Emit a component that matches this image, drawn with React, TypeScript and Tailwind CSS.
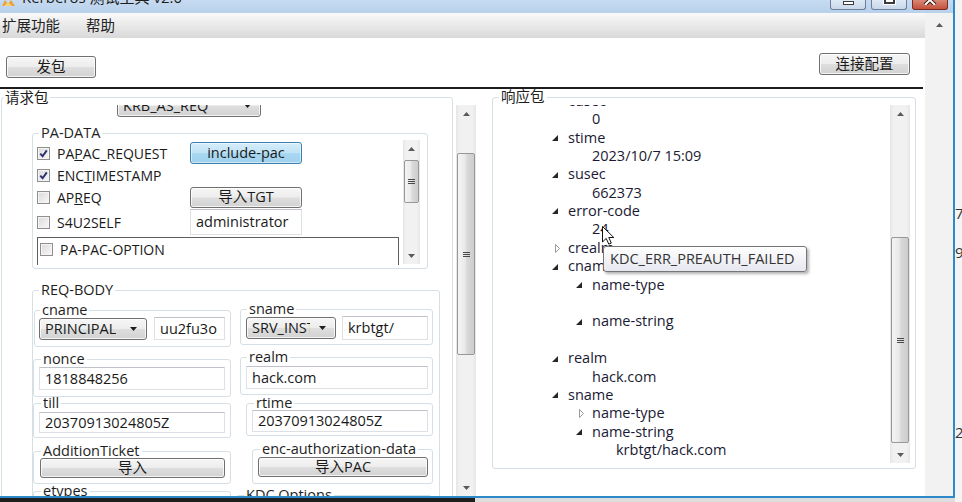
import clsx, { type ClassValue } from "clsx";
import { twMerge } from "tailwind-merge";
import type { ReactNode } from "react";

const cn = (...v: ClassValue[]) => twMerge(clsx(v));

const font = "font-['Open_Sans','Noto_Sans_CJK_SC',sans-serif]";
const btn =
  "rounded-[3px] border border-[#707070] bg-[linear-gradient(#f6f6f6_0%,#ededed_48%,#dedede_52%,#d2d2d2_100%)] shadow-[inset_0_0_0_1px_rgba(255,255,255,0.75)]";

function Group({
  label,
  className,
  legendClass,
  children,
}: {
  label: string;
  className?: string;
  legendClass?: string;
  children?: ReactNode;
}) {
  return (
    <fieldset className={cn("min-w-0 shrink-0 rounded-[3px] border border-[#d5dfe5]", className)}>
      <legend className={cn("ml-[6px] px-[2px] text-[14.5px] leading-[16px] text-[#1e1e1e]", legendClass)}>
        {label}
      </legend>
      {children}
    </fieldset>
  );
}

function TextBox({ value, className }: { value: string; className?: string }) {
  return (
    <div
      className={cn(
        "flex shrink-0 items-center overflow-hidden border border-[#dde1e6] border-t-[#bfc3c9] bg-white px-[5px] text-[14.5px] whitespace-nowrap",
        className
      )}
    >
      {value}
    </div>
  );
}

function Button({ children, className }: { children: ReactNode; className?: string }) {
  return <div className={cn(btn, "flex shrink-0 items-center justify-center text-[14.5px]", className)}>{children}</div>;
}

function Combo({ value, className, textClass }: { value: string; className?: string; textClass?: string }) {
  return (
    <div className={cn(btn, "flex shrink-0 items-center justify-between overflow-hidden pl-[5px] pr-[9px] text-[14.5px]", className)}>
      <span className={cn("overflow-hidden whitespace-nowrap", textClass)}>{value}</span>
      <svg width="7" height="4" className="shrink-0">
        <path d="M0 0h7L3.5 4z" fill="#1e1e1e" />
      </svg>
    </div>
  );
}

function CheckBox({ checked, children, className }: { checked?: boolean; children: ReactNode; className?: string }) {
  return (
    <div className={cn("flex items-center gap-[7px] text-[14px]", className)}>
      <div className="flex h-[13px] w-[13px] shrink-0 items-center justify-center border border-[#8f8f8f] bg-[linear-gradient(135deg,#dadada,#f8f8f8)] shadow-[inset_0_0_0_1px_#f4f4f4]">
        {checked && (
          <svg width="9" height="9" viewBox="0 0 9 9">
            <path d="M1.3 4.6L3.6 7.2L7.8 1.4" fill="none" stroke="#2b2d70" strokeWidth="1.9" />
          </svg>
        )}
      </div>
      <span className="whitespace-nowrap">{children}</span>
    </div>
  );
}

function Arrow({ up }: { up?: boolean }) {
  return (
    <svg width="7" height="4">
      <path d={up ? "M0 4L3.5 0L7 4z" : "M0 0h7L3.5 4z"} fill="#5a5a5a" />
    </svg>
  );
}

function VScroll({ className, thumb }: { className?: string; thumb?: string }) {
  return (
    <div
      className={cn(
        "flex shrink-0 flex-col items-stretch bg-[linear-gradient(to_right,#e6e6e6,#f1f1f1_18%,#f1f1f1_82%,#e6e6e6)]",
        className
      )}
    >
      <div className="flex h-[17px] shrink-0 items-center justify-center">
        <Arrow up />
      </div>
      {thumb && (
        <div
          className={cn(
            "mx-[1px] flex shrink-0 items-center justify-center rounded-[2px] border border-[#979797] bg-[linear-gradient(to_right,#f4f4f4,#e9e9e9_45%,#d9d9d9_55%,#cdcdcd)]",
            thumb
          )}
        >
          <div className="flex w-[7px] flex-col gap-[1px]">
            <div className="h-[1px] bg-[#4a4a4a]" />
            <div className="h-[1px] bg-[#4a4a4a]" />
            <div className="h-[1px] bg-[#4a4a4a]" />
          </div>
        </div>
      )}
      <div className="flex-1" />
      <div className="flex h-[17px] shrink-0 items-center justify-center">
        <Arrow />
      </div>
    </div>
  );
}

function TitleBar() {
  return (
    <div className="flex h-[13px] shrink-0 overflow-hidden bg-[linear-gradient(#c6dbf1,#b8d0ea)]">
      <svg width="16" height="8" className="ml-[1px] shrink-0">
        <path d="M1 6L4 0L7 4L10 0L14 6z" fill="#e7a33a" />
        <path d="M3 6L7 2L11 6z" fill="#f5d27a" />
      </svg>
      <div className="-mt-[13px] ml-[5px] text-[15px] leading-[21px] whitespace-nowrap text-[#1e1e1e]">Kerberos 测试工具 v2.0</div>
      <div className="ml-auto mr-[5px] flex gap-[5px]">
        <div className="flex h-[10px] w-[36px] items-start justify-center rounded-b-[3px] border border-t-0 border-[#6d7f9a] bg-[linear-gradient(#dfe9f5,#c8d7ea)]">
          <div className="mt-[1px] h-[4px] w-[11px] border border-[#3b3b3b] bg-white" />
        </div>
        <div className="flex h-[10px] w-[36px] items-start justify-center rounded-b-[3px] border border-t-0 border-[#6d7f9a] bg-[linear-gradient(#dfe9f5,#c8d7ea)]">
          <div className="-mt-[5px] h-[9px] w-[11px] border-2 border-[#3b3b3b] bg-white shadow-[0_0_0_1px_#fff]" />
        </div>
        <div className="flex h-[10px] w-[36px] items-start justify-center rounded-b-[3px] border border-t-0 border-[#7a2c20] bg-[linear-gradient(#d98877,#c4513c)]">
          <svg width="14" height="5">
            <path d="M2 -5L12 5M12 -5L2 5" stroke="#3a1a14" strokeWidth="4" />
            <path d="M2 -5L12 5M12 -5L2 5" stroke="#fff" strokeWidth="2" />
          </svg>
        </div>
      </div>
    </div>
  );
}

function RequestPanel() {
  return (
    <div className="flex w-[477px] shrink-0">
      <Group label="请求包" className="ml-[1px] mt-[1px] h-[440px] w-[452px]" legendClass="ml-[2px] px-[1px] leading-[15px]">
        <div className="h-[392px] overflow-hidden">
          <Combo value="KRB_AS_REQ" className="-mt-[10px] ml-[115px] h-[22px] w-[144px]" />

          <Group label="PA-DATA" className="ml-[30px] mt-[8px] h-[144px] w-[396px]">
            <div className="flex">
              <div className="h-[124px] w-[368px] overflow-hidden pl-[4px]">
                <div className="mt-[1px] flex h-[22px] items-center">
                  <CheckBox checked className="w-[153px]">
                    PA<span className="underline">P</span>AC_REQUEST
                  </CheckBox>
                  <Button className="h-[22px] w-[112px] border-[#3c7fb1] bg-[linear-gradient(#d6edfa_0%,#c0e3f6_48%,#a9d7f1_52%,#9fd1ee_100%)] shadow-[inset_0_0_0_1px_rgba(255,255,255,0.5)]">
                    include-pac
                  </Button>
                </div>
                <div className="flex h-[22px] items-center">
                  <CheckBox checked className="w-[153px]">
                    ENC<span className="underline">T</span>IMESTAMP
                  </CheckBox>
                </div>
                <div className="flex h-[22px] items-center">
                  <CheckBox className="w-[153px]">
                    AP<span className="underline">R</span>EQ
                  </CheckBox>
                  <Button className="h-[21px] w-[112px]">导入TGT</Button>
                </div>
                <div className="mt-[1px] flex h-[26px] items-center">
                  <CheckBox className="w-[153px]">S4U2SELF</CheckBox>
                  <TextBox value="administrator" className="h-[26px] w-[112px]" />
                </div>
                <div className="mt-[2px] h-[60px] w-[362px] border border-b-0 border-[#5e5e5e] pl-[2px]">
                  <div className="flex h-[23px] items-center">
                    <CheckBox>PA-PAC-OPTION</CheckBox>
                  </div>
                  <div className="flex h-[20px] items-start pl-[48px]">
                    <CheckBox>Claims</CheckBox>
                  </div>
                </div>
              </div>
              <VScroll className="-mt-[1px] ml-[2px] h-[124px] w-[17px]" thumb="mt-[3px] h-[43px]" />
            </div>
          </Group>

          <Group label="REQ-BODY" className="ml-[30px] mt-[13px] h-[300px] w-[408px]">
            <div className="mt-[4px] flex items-start">
              <Group label="cname" className="ml-[1px] h-[45px] w-[197px]" legendClass="ml-[5px]">
                <div className="flex items-start">
                  <Combo value="PRINCIPAL" className="ml-[4px] h-[22px] w-[108px]" />
                  <TextBox value="uu2fu3o" className="-mt-[1px] ml-[7px] h-[23px] w-[71px]" />
                </div>
              </Group>
              <Group label="sname" className="-mt-[1px] ml-[9px] h-[44px] w-[193px]">
                <div className="flex items-start">
                  <Combo value="SRV_INST" className="ml-[5px] h-[22px] w-[90px]" textClass="w-[58px]" />
                  <TextBox value="krbtgt/" className="-mt-[1px] ml-[6px] h-[24px] w-[86px]" />
                </div>
              </Group>
            </div>

            <div className="mt-[4px] flex items-start">
              <Group label="nonce" className="h-[46px] w-[198px]" legendClass="ml-[7px]">
                <TextBox value="1818848256" className="ml-[5px] h-[23px] w-[186px]" />
              </Group>
              <Group label="realm" className="-mt-[2px] ml-[9px] h-[46px] w-[193px]">
                <TextBox value="hack.com" className="ml-[5px] mt-[1px] h-[23px] w-[182px]" />
              </Group>
            </div>

            <div className="-mt-[2px] flex items-start">
              <Group label="till" className="h-[43px] w-[198px]" legendClass="ml-[7px]">
                <TextBox value="20370913024805Z" className="ml-[5px] mt-[1px] h-[21px] w-[186px]" />
              </Group>
              <Group label="rtime" className="ml-[15px] h-[41px] w-[187px]" legendClass="ml-[7px]">
                <TextBox value="20370913024805Z" className="-mt-[1px] ml-[5px] h-[22px] w-[176px]" />
              </Group>
            </div>

            <div className="mt-[5px] flex items-start">
              <Group label="AdditionTicket" className="h-[41px] w-[198px]" legendClass="ml-[7px]">
                <Button className="-mt-[1px] ml-[6px] h-[20px] w-[185px]">导入</Button>
              </Group>
              <Group label="enc-authorization-data" className="-mt-[2px] ml-[21px] h-[43px] w-[181px]" legendClass="ml-[7px]">
                <Button className="ml-[5px] h-[20px] w-[170px]">导入PAC</Button>
              </Group>
            </div>

            <div className="-mt-[1px] flex items-start">
              <Group label="etypes" className="h-[40px] w-[198px]" legendClass="ml-[7px]" />
              <Group label="KDC Options" className="ml-[5px] mt-[4px] h-[40px] w-[196px]" legendClass="ml-[7px]" />
            </div>
          </Group>
        </div>
      </Group>
      <VScroll className="ml-[3px] mt-[16px] h-[391px] w-[20px]" thumb="mt-[31px] h-[202px]" />
    </div>
  );
}

type Row = { lvl: 1 | 2 | 3; text?: string; arrow?: "open" | "closed" };

const rows: Row[] = [
  { lvl: 1, text: "cusec", arrow: "open" },
  { lvl: 2, text: "0" },
  { lvl: 1, text: "stime", arrow: "open" },
  { lvl: 2, text: "2023/10/7 15:09" },
  { lvl: 1, text: "susec", arrow: "open" },
  { lvl: 2, text: "662373" },
  { lvl: 1, text: "error-code", arrow: "open" },
  { lvl: 2, text: "24" },
  { lvl: 1, text: "crealm", arrow: "closed" },
  { lvl: 1, text: "cname", arrow: "open" },
  { lvl: 2, text: "name-type", arrow: "open" },
  { lvl: 3 },
  { lvl: 2, text: "name-string", arrow: "open" },
  { lvl: 3 },
  { lvl: 1, text: "realm", arrow: "open" },
  { lvl: 2, text: "hack.com" },
  { lvl: 1, text: "sname", arrow: "open" },
  { lvl: 2, text: "name-type", arrow: "closed" },
  { lvl: 2, text: "name-string", arrow: "open" },
  { lvl: 3, text: "krbtgt/hack.com" },
];

const indent = { 1: "pl-[57px]", 2: "pl-[81px]", 3: "pl-[105px]" };

function TreeRow({ row, first }: { row: Row; first?: boolean }) {
  return (
    <div className={cn("flex h-[18.4px] items-center text-[14.5px] text-[#1a1a34]", indent[row.lvl], first && "-mt-[13.6px]")}>
      <div className="flex w-[18px] shrink-0 items-center">
        {row.arrow === "open" && (
          <svg width="6" height="6" className="ml-[2px] mt-[1px]">
            <path d="M6 0V6H0z" fill="#262626" />
          </svg>
        )}
        {row.arrow === "closed" && (
          <svg width="6" height="9" className="ml-[5px] mt-[1px]">
            <path d="M0.5 0.5L4.5 4.5L0.5 8.5z" fill="#fff" stroke="#9a9a9a" />
          </svg>
        )}
      </div>
      <span className="whitespace-nowrap">{row.text}</span>
    </div>
  );
}

function ResponsePanel() {
  return (
    <Group label="响应包" className="ml-[15px] h-[380px] w-[424px]">
      <div className="flex">
        <div className="h-[357px] w-[396px] overflow-hidden">
          {rows.map((r, i) => (
            <TreeRow key={i} row={r} first={i === 0} />
          ))}
        </div>
        <VScroll className="ml-[1px] h-[358px] w-[20px]" thumb="mt-[115px] h-[206px]" />
      </div>
    </Group>
  );
}

export default function App() {
  return (
    <div className={cn("relative flex h-[502px] w-[962px] overflow-hidden bg-[#f4f4f4] text-[#1a1a1a]", font)}>
      <div className="flex w-[955px] shrink-0 flex-col">
        <div className="flex h-[498px] flex-col border-r-2 border-b-2 border-[#2d89c8] bg-white">
          <TitleBar />
          <div className="flex min-h-0 flex-1">
            <main className="flex w-[925px] shrink-0 flex-col">
              <div className="flex h-[25px] shrink-0 items-center gap-[26px] bg-[linear-gradient(#f9f9f9,#d9d9d9)] pl-[2px] text-[14.5px] text-[#222]">
                <span>扩展功能</span>
                <span>帮助</span>
              </div>
              <div className="flex h-[49px] shrink-0 items-start justify-between">
                <Button className="ml-[6px] mt-[18px] h-[22px] w-[90px]">发包</Button>
                <Button className="mr-[15px] mt-[15px] h-[22px] w-[91px]">连接配置</Button>
              </div>
              <div className="h-[2px] w-[923px] shrink-0 bg-[#1c1c1c]" />
              <div className="flex min-h-0 flex-1 overflow-hidden">
                <RequestPanel />
                <ResponsePanel />
              </div>
            </main>
            <div className="flex flex-1 flex-col items-center bg-[#f2f2f2] pt-[10px]">
              <Arrow up />
            </div>
          </div>
        </div>
        <div className="flex h-[4px]">
          <div className="w-[475px] bg-[#1e1e1e]" />
          <div className="flex-1 bg-[#dedede]" />
        </div>
      </div>
      <div className="flex w-[7px] flex-col overflow-hidden text-[15px] leading-[20px] text-[#333]">
        <span className="mt-[203px]">7,</span>
        <span className="mt-[19px]">9,</span>
        <span className="mt-[160px]">2,</span>
      </div>

      {/* mouse pointer + tooltip over the tree */}
      <svg width="13" height="20" className="absolute left-[602px] top-[226px]">
        <path d="M0.5 0.5V16L4.2 12.4L6.8 18.2L9.3 17.1L6.8 11.5H11.8Z" fill="#fff" stroke="#111" />
      </svg>
      <div className="absolute left-[603px] top-[246px] flex h-[26px] w-[204px] items-center rounded-[3px] border border-[#767676] bg-[linear-gradient(#ffffff,#e6e7f0)] px-[6px] text-[14.5px] text-[#333] shadow-[2px_2px_3px_rgba(0,0,0,0.3)]">
        KDC_ERR_PREAUTH_FAILED
      </div>
    </div>
  );
}
